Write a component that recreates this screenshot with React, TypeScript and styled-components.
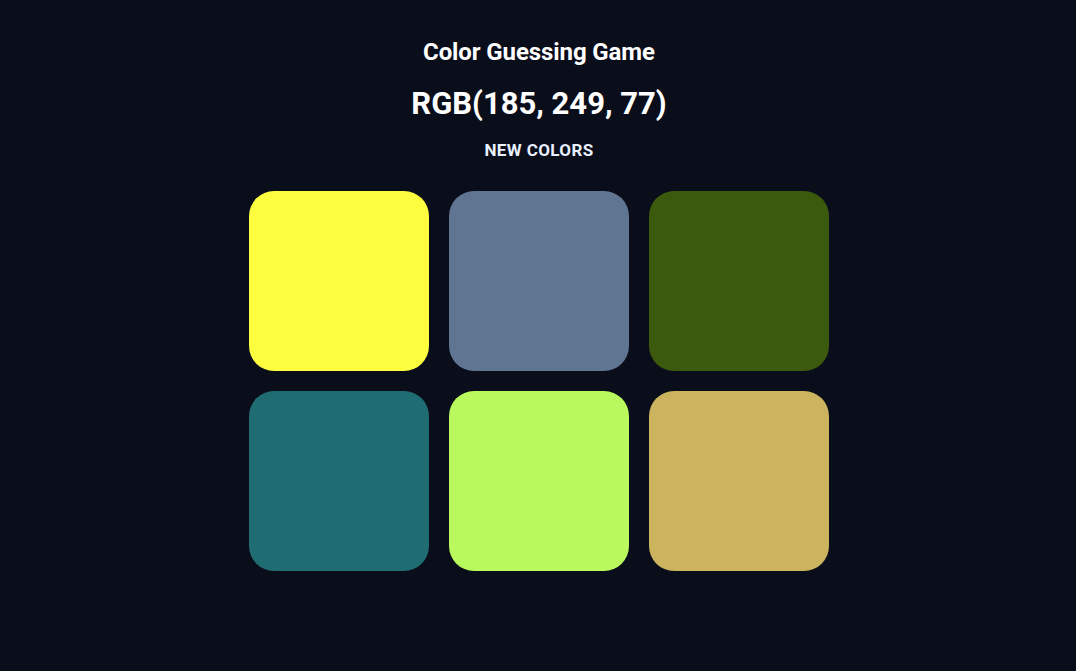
import React from "react";
import styled, { createGlobalStyle } from "styled-components";

const Global = createGlobalStyle`
  html, body { margin: 0; padding: 0; background: #0a0d1a; }
  body { font-family: Roboto, "Noto Sans", sans-serif; color: #ffffff; }
`;

const Page = styled.div`
  min-height: 671px;
  display: flex;
  flex-direction: column;
  align-items: center;
  padding-top: 36px;
  padding-left: 2px;
  box-sizing: border-box;
`;

const Title = styled.h1`
  margin: 0;
  font-size: 24px;
  font-weight: 700;
  letter-spacing: -0.1px;
  line-height: 32px;
`;

const Target = styled.h2`
  margin: 16px 0 0;
  font-size: 31px;
  font-weight: 700;
  line-height: 40px;
`;

const NewButton = styled.button`
  margin-top: 12px;
  background: transparent;
  border: none;
  color: #e8f0ff;
  font-family: Roboto, sans-serif;
  font-size: 17px;
  font-weight: 700;
  letter-spacing: 0.4px;
  line-height: 20px;
  text-transform: uppercase;
  padding: 4px 8px;
  cursor: pointer;
`;

const Grid = styled.div`
  margin-top: 27px;
  display: grid;
  grid-template-columns: repeat(3, 180px);
  gap: 20px;
`;

const Swatch = styled.div<{ $c: string }>`
  width: 180px;
  height: 180px;
  border-radius: 25px;
  background: ${(p) => p.$c};
  cursor: pointer;
`;

const colors = ["#fdfd3f", "#5f7592", "#3c5a0e", "#1f6d73", "#b9f95d", "#cbb45d"];

export default function App() {
  return (
    <>
      <Global />
      <Page>
        <Title>Color Guessing Game</Title>
        <Target>RGB(185, 249, 77)</Target>
        <NewButton>New Colors</NewButton>
        <Grid>
          {colors.map((c, i) => (
            <Swatch key={i} $c={c} />
          ))}
        </Grid>
      </Page>
    </>
  );
}
